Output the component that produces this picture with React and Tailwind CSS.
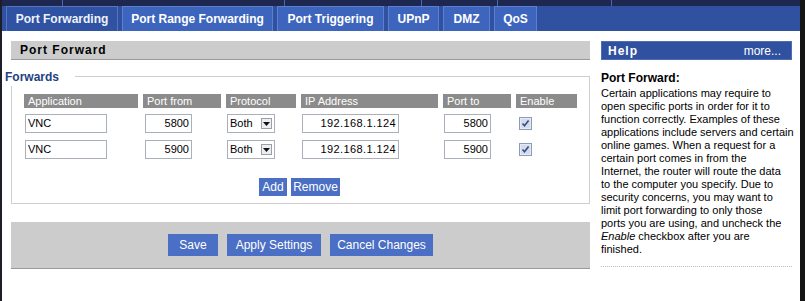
import React from 'react';

const FONT = "font-['Liberation_Sans',Arial,sans-serif]";

const TABS = [
  { label: 'Port Forwarding', w: 'w-[112px]', active: true },
  { label: 'Port Range Forwarding', w: 'w-[151px]' },
  { label: 'Port Triggering', w: 'w-[107px]' },
  { label: 'UPnP', w: 'w-[51px]' },
  { label: 'DMZ', w: 'w-[47px]' },
  { label: 'QoS', w: 'w-[43px]' },
];

const COLS = [
  { label: 'Application', w: 'w-[114px]' },
  { label: 'Port from', w: 'w-[78px]' },
  { label: 'Protocol', w: 'w-[70px]' },
  { label: 'IP Address', w: 'w-[137px]' },
  { label: 'Port to', w: 'w-[68px]' },
  { label: 'Enable', w: 'w-[61px]' },
];

const ROWS = [
  { app: 'VNC', from: '5800', ip: '192.168.1.124', to: '5800' },
  { app: 'VNC', from: '5900', ip: '192.168.1.124', to: '5900' },
];

const HELP_LINES = [
  'Certain applications may require to',
  'open specific ports in order for it to',
  'function correctly. Examples of these',
  'applications include servers and certain',
  'online games. When a request for a',
  'certain port comes in from the',
  'Internet, the router will route the data',
  'to the computer you specify. Due to',
  'security concerns, you may want to',
  'limit port forwarding to only those',
  'ports you are using, and uncheck the',
];

function Field({ value, className, right }) {
  return (
    <div
      className={
        'h-[19px] border border-[#a9b0ba] bg-white flex items-center px-[2px] text-[11px] text-black ' +
        (right ? 'justify-end ' : '') +
        className
      }
    >
      {value}
    </div>
  );
}

function Checked() {
  return (
    <svg width="13" height="13" viewBox="0 0 13 13">
      <rect x="0.5" y="0.5" width="12" height="12" fill="#e6ebf3" stroke="#8d9db5" />
      <rect x="2" y="2" width="9" height="9" fill="#d4dcea" />
      <path d="M3.5 6.5 L5.5 8.8 L9.6 3.6" fill="none" stroke="#2f4f8f" strokeWidth="1.6" />
    </svg>
  );
}

function Btn({ children, className = '' }) {
  return (
    <div className={'bg-[#4a6fc4] text-white text-[12px] flex items-center justify-center ' + className}>
      {children}
    </div>
  );
}

export default function App() {
  return (
    <div className={'w-[805px] h-[301px] overflow-hidden flex bg-white ' + FONT}>
      {/* left edge */}
      <div className="w-[2px] bg-[#1c1f2a]" />

      <div className="flex-1 flex flex-col">
        {/* tab bar */}
        <div className="h-[31px] bg-[#30519f] flex flex-col">
          <div className="h-[6px] bg-[#1e2750] flex">
            <div className="w-[61px] border-r border-[#4d67ad]" />
            <div className="w-[222px] border-r border-[#4d67ad]" />
            <div className="w-[137px] border-r border-[#4d67ad]" />
            <div className="w-[76px] border-r border-[#4d67ad]" />
            <div className="w-[114px] border-r border-[#4d67ad]" />
          </div>
          <div className="flex-1 flex items-end gap-[4px] pl-[4px]">
            {TABS.map((t) => (
              <div
                key={t.label}
                className={
                  t.w +
                  ' h-[25px] flex items-center justify-center text-[12px] font-bold border-t border-l border-r ' +
                  (t.active
                    ? 'bg-[#2f52a3] border-[#5575c3] text-[#eef2fa]'
                    : 'bg-[#3e65bd] border-[#5b80cf] text-white')
                }
              >
                {t.label}
              </div>
            ))}
          </div>
        </div>

        {/* content */}
        <div className="flex-1 flex pl-[3px]">
          {/* main */}
          <div className="w-[585px] flex flex-col">
            <div className="ml-[6px] mt-[10px] h-[19px] bg-[#cccccc] border-b border-[#9a9a9a] flex items-center pl-[9px] text-[12px] font-bold tracking-[1px] text-black">
              Port Forward
            </div>

            <div className="relative ml-[6px] mt-[16px] border border-[#cfcfcf] pl-[12px] pt-[17px] pb-[7px]">
              <span className="absolute -left-[7px] -top-[9px] bg-white pr-[16px] text-[12px] font-bold text-[#22427f]">
                Forwards
              </span>

              <div className="flex gap-[5px]">
                {COLS.map((c) => (
                  <div
                    key={c.label}
                    className={c.w + ' h-[14px] bg-[#8b8b8b] text-white text-[11px] leading-[14px] pl-[4px]'}
                  >
                    {c.label}
                  </div>
                ))}
              </div>

              <div className="flex flex-col gap-[7px] mt-[6px]">
                {ROWS.map((r, i) => (
                  <div key={i} className="flex gap-[5px] items-center">
                    <div className="w-[114px] pl-[1px]">
                      <Field value={r.app} className="w-[82px]" />
                    </div>
                    <div className="w-[78px] pl-[2px]">
                      <Field value={r.from} right className="w-[47px]" />
                    </div>
                    <div className="w-[70px] pl-[1px]">
                      <div className="w-[48px] h-[19px] border border-[#a9b0ba] bg-white flex items-center justify-between pl-[2px] pr-[2px] text-[11px]">
                        <span>Both</span>
                        <div className="w-[11px] h-[11px] border border-[#9aa0a8] bg-[#eceef2] flex items-center justify-center">
                          <svg width="7" height="4" viewBox="0 0 7 4">
                            <path d="M0 0 H7 L3.5 4 Z" fill="#111" />
                          </svg>
                        </div>
                      </div>
                    </div>
                    <div className="w-[137px] pl-[1px]">
                      <Field value={r.ip} right className="w-[97px] tracking-[0.4px]" />
                    </div>
                    <div className="w-[68px] pl-[1px]">
                      <Field value={r.to} right className="w-[47px]" />
                    </div>
                    <div className="w-[61px] pl-[3px] flex items-center">
                      <Checked />
                    </div>
                  </div>
                ))}
              </div>

              <div className="flex justify-center gap-[4px] mt-[19px] pr-[14px]">
                <Btn className="w-[28px] h-[18px]">Add</Btn>
                <Btn className="w-[49px] h-[18px]">Remove</Btn>
              </div>
            </div>

            <div className="ml-[6px] mt-[18px] h-[47px] bg-[#cccccc] border-b border-[#9a9a9a] flex items-center justify-center gap-[9px]">
              <Btn className="w-[50px] h-[22px]">Save</Btn>
              <Btn className="w-[94px] h-[22px]">Apply Settings</Btn>
              <Btn className="w-[103px] h-[22px]">Cancel Changes</Btn>
            </div>
          </div>

          {/* help */}
          <div className="w-[191px] ml-[11px] flex flex-col">
            <div className="mt-[10px] h-[19px] bg-[#30519f] border border-[#4d6db8] flex items-center justify-between pl-[6px] pr-[10px] text-white text-[12px]">
              <span className="font-bold tracking-[1px]">Help</span>
              <span>more...</span>
            </div>
            <div className="mt-[10px] text-[12px] font-bold text-black leading-[16px]">Port Forward:</div>
            <div className="mt-[1px] text-[11px] leading-[13px] text-black">
              {HELP_LINES.map((l) => (
                <div key={l} className="whitespace-nowrap">{l}</div>
              ))}
              <div className="whitespace-nowrap">
                <i>Enable</i> checkbox after you are
              </div>
              <div>finished.</div>
            </div>
            <div className="mt-[10px] border-t border-dotted border-[#bdbdbd]" />
          </div>
        </div>
      </div>

      {/* right edge */}
      <div className="w-[5px] bg-[#141414]" />
    </div>
  );
}
